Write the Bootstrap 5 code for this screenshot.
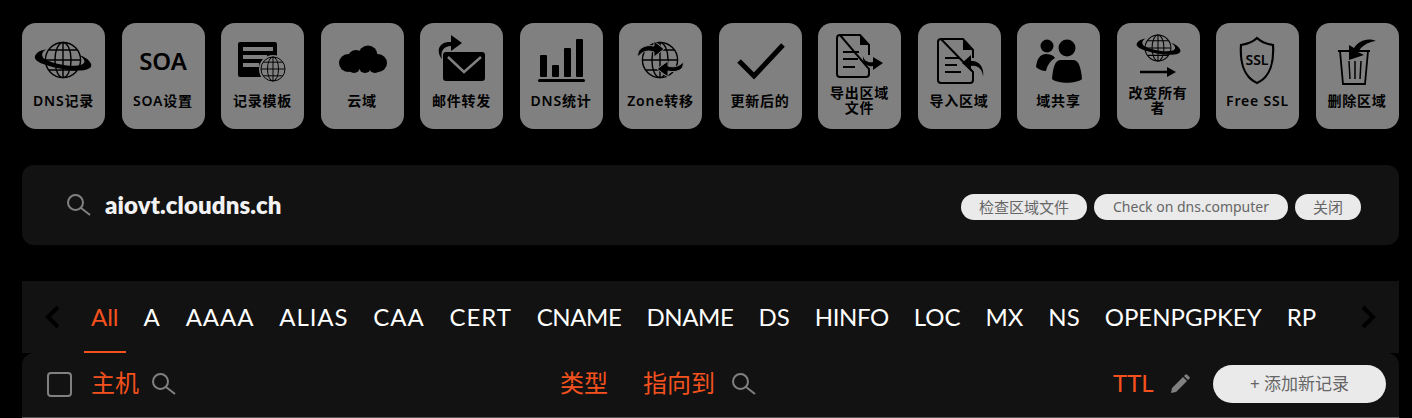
<!DOCTYPE html>
<html lang="en">

<head>
    <title>aiovt.cloudns.ch</title>
    <link href="https://cdn.jsdelivr.net/npm/bootstrap@5.3.0/dist/css/bootstrap.min.css" rel="stylesheet">
    <style>
        html, body { height: 418px; overflow: hidden; }
        body { background: #000; padding: 23px 13px 0 22px; font-family: "Lato", "Noto Sans CJK SC", sans-serif; }
        .tile-row { margin: 0 .4px 0 0; }
        .tile { width: 83px; height: 106px; background: #808080; border-radius: 14px; color: #000; text-decoration: none; }
        .tile svg { display: block; }
        .tile-label { height: 30px; width: 72px; font: 600 14px/15px "Noto Sans", "Noto Sans CJK SC", sans-serif; letter-spacing: .8px; text-align: center; }
        .domain-bar { height: 80px; margin-top: 36px; background: #121212; border-radius: 12px; padding: 0 38px 0 44px; }
        .domain-name { color: #f2f2f2; font: 800 24px "Lato", sans-serif; letter-spacing: .1px; margin: 0 0 2px 14px; }
        .pill-group { gap: 7px; margin-top: 4px; }
        .pill-btn { height: 26px; padding: 0 19px; background: #eaeaea; color: #666; border: 0; font: 14px/26px "Noto Sans", "Noto Sans CJK SC", sans-serif; }
        .pill-cjk { padding: 0 18px; font-size: 15px; }
        .type-bar { height: 72px; margin-top: 36px; background: #121212; padding-left: 22px; }
        .type-bar .nav-link { height: 72px; padding: 18px 7px 0; margin-right: 11px; color: #fff; font: 24px/36px "Lato", "Noto Sans CJK SC", sans-serif; }
        .type-bar .nav-link.active { color: #f4511e; border-bottom: 2px solid #f4511e; }
        .type-bar .nav-link.tab-wide { letter-spacing: .9px; }
        .type-bar .nav-link.tab-narrow { letter-spacing: -.4px; }
        .type-list { margin-left: 23px; flex-wrap: nowrap; }
        .arrow-gap { margin-left: 26px; }
        .head-row { height: 65px; background: #121212; border-radius: 12px 12px 0 0; border-bottom: 1px solid #555; padding: 0 13px 2px 25px; }
        .head-row .form-check-input { width: 25px; height: 25px; margin: 0; background-color: transparent; border: 2px solid #808080; border-radius: 4px; flex-shrink: 0; }
        .head-title { color: #f4511e; font: 24px/1 "Lato", "Noto Sans CJK SC", sans-serif; margin-bottom: 2px; }
        .col-host { width: 488px; padding-left: 19px; flex-shrink: 0; }
        .col-type { width: 83px; flex-shrink: 0; }
        .col-point { width: 470px; flex-shrink: 0; }
        .add-btn { width: 173px; height: 38px; padding: 0; background: #eaeaea; color: #666; border: 0; font: 17px/38px "Noto Sans", "Noto Sans CJK SC", sans-serif; flex-shrink: 0; }
    </style>
</head>

<body>
    <svg width="0" height="0" class="d-block">
        <defs>
            <symbol id="globe" viewBox="0 0 40 40">
                <g fill="none" stroke="#000" stroke-width="1.5">
                    <circle cx="20" cy="20" r="18.5"/>
                    <ellipse cx="20" cy="20" rx="8.5" ry="18.5"/>
                    <path d="M20 1.5v37M1.5 20h37M5 9.5h30M5 30.5h30"/>
                </g>
            </symbol>
            <symbol id="magnifier" viewBox="0 0 25 25">
                <circle cx="9.5" cy="9.5" r="7.5" fill="none" stroke="#808080" stroke-width="2"/>
                <path d="M15 15l9 7" fill="none" stroke="#808080" stroke-width="2"/>
            </symbol>
            <symbol id="ring" viewBox="0 0 60 24">
                <path d="M3 6C-3 12 3 17 28 22C50 26 61 23 59 17C57 12 51 9 47 8C53 12 54 16 49 18C39 21 19 17 11 12C6 8 9 4 13 2C8 3 5 4 3 6Z" fill="#000"/>
            </symbol>
        </defs>
    </svg>

    <div class="tile-row d-flex justify-content-between">
        <a class="tile d-flex flex-column align-items-center" href="#">
            <svg width="83" height="62" viewBox="0 0 83 62">
                <use href="#globe" x="22" y="18" width="38" height="38"/>
                <use href="#ring" x="12" y="24" width="58" height="24"/>
            </svg>
            <div class="tile-label d-flex align-items-center justify-content-center">DNS记录</div>
        </a>
        <a class="tile d-flex flex-column align-items-center" href="#">
            <svg width="83" height="62" viewBox="0 0 83 62">
                <text x="41" y="47" text-anchor="middle" font-family="Noto Sans" font-weight="600" font-size="24">SOA</text>
            </svg>
            <div class="tile-label d-flex align-items-center justify-content-center">SOA设置</div>
        </a>
        <a class="tile d-flex flex-column align-items-center" href="#">
            <svg width="83" height="62" viewBox="0 0 83 62">
                <path d="M19 19h35a2 2 0 0 1 2 2v14a14 14 0 0 0-16 19H19a2 2 0 0 1-2-2V21a2 2 0 0 1 2-2z" fill="#000"/>
                <path d="M22 24h30v4H22zM22 32h24v4H22zM22 40h16v4H22z" fill="#808080"/>
                <circle cx="52" cy="46" r="14" fill="#808080"/>
                <use href="#globe" x="39" y="33" width="26" height="26"/>
            </svg>
            <div class="tile-label d-flex align-items-center justify-content-center">记录模板</div>
        </a>
        <a class="tile d-flex flex-column align-items-center" href="#">
            <svg width="83" height="62" viewBox="0 0 83 62" fill="#000">
                <circle cx="27" cy="40" r="9"/>
                <circle cx="35" cy="35" r="8"/>
                <circle cx="47" cy="32" r="9.500"/>
                <circle cx="57" cy="40" r="9"/>
                <circle cx="33" cy="44" r="6"/>
                <circle cx="44" cy="44" r="6"/>
                <circle cx="54" cy="44" r="6"/>
            </svg>
            <div class="tile-label d-flex align-items-center justify-content-center">云域</div>
        </a>
        <a class="tile d-flex flex-column align-items-center" href="#">
            <svg width="83" height="62" viewBox="0 0 83 62">
                <rect x="23" y="29" width="42" height="29" rx="3" fill="#000"/>
                <path d="M28 34l16 15l17-15" fill="none" stroke="#808080" stroke-width="2.500"/>
                <path d="M22 36C15 27 20 18 31 19V12l11 8l-11 8V23C24 23 20 28 22 36Z" fill="#000"/>
            </svg>
            <div class="tile-label d-flex align-items-center justify-content-center">邮件转发</div>
        </a>
        <a class="tile d-flex flex-column align-items-center" href="#">
            <svg width="83" height="62" viewBox="0 0 83 62">
                <rect x="20" y="32" width="7" height="22" rx="1" fill="#000"/>
                <rect x="32" y="42" width="7" height="12" rx="1" fill="#000"/>
                <rect x="44" y="25" width="7" height="29" rx="1" fill="#000"/>
                <rect x="56" y="16" width="7" height="38" rx="1" fill="#000"/>
                <rect x="18" y="56" width="47" height="3" rx="1.500" fill="#000"/>
            </svg>
            <div class="tile-label d-flex align-items-center justify-content-center">DNS统计</div>
        </a>
        <a class="tile d-flex flex-column align-items-center" href="#">
            <svg width="83" height="62" viewBox="0 0 83 62">
                <use href="#globe" x="22" y="17" width="38" height="40"/>
                <path d="M19 34C17 26 26 21 35 23V18l10 8l-10 8V29C29 27 23 28 19 34Z" fill="#000" stroke="#808080"/>
                <path d="M64 39C66 47 57 50 49 48V54L38 46l11-8V43C55 45 61 43 64 39Z" fill="#000" stroke="#808080"/>
            </svg>
            <div class="tile-label d-flex align-items-center justify-content-center">Zone转移</div>
        </a>
        <a class="tile d-flex flex-column align-items-center" href="#">
            <svg width="83" height="62" viewBox="0 0 83 62">
                <path d="M20 38l15 15L64 22" fill="none" stroke="#000" stroke-width="5"/>
            </svg>
            <div class="tile-label d-flex align-items-center justify-content-center">更新后的</div>
        </a>
        <a class="tile d-flex flex-column align-items-center" href="#">
            <svg width="83" height="62" viewBox="0 0 83 62">
                <path d="M22 12h20l9 10v10M51 46v5a3 3 0 0 1-3 3H22a3 3 0 0 1-3-3V15a3 3 0 0 1 3-3z" fill="none" stroke="#000" stroke-width="2"/>
                <path d="M42 12l9 10H42z" fill="#000"/>
                <path d="M25 29h16M25 36h15M25 44h12" stroke="#000" stroke-width="2"/>
                <path d="M45 33C46 38 50 40 55 39V34l10 6l-10 7V43C50 44 44 41 45 33Z" fill="#000"/>
            </svg>
            <div class="tile-label d-flex align-items-center justify-content-center">导出区域文件</div>
        </a>
        <a class="tile d-flex flex-column align-items-center" href="#">
            <svg width="83" height="62" viewBox="0 0 83 62">
                <path d="M23 16h22l10 11v8M55 49v8a3 3 0 0 1-3 3H23a3 3 0 0 1-3-3V19a3 3 0 0 1 3-3z" fill="none" stroke="#000" stroke-width="2"/>
                <path d="M45 16l10 11H45z" fill="#000"/>
                <path d="M27 35h15M27 42h12M27 49h16" stroke="#000" stroke-width="2"/>
                <path d="M65 54C65 47 60 42 53 43V48L44 40l9-8v6C60 37 67 44 65 54Z" fill="#000"/>
            </svg>
            <div class="tile-label d-flex align-items-center justify-content-center">导入区域</div>
        </a>
        <a class="tile d-flex flex-column align-items-center" href="#">
            <svg width="83" height="62" viewBox="0 0 83 62">
                <circle cx="30" cy="23" r="6.500" fill="#000"/>
                <circle cx="50" cy="25" r="8.500" fill="#000"/>
                <path d="M19 44C20 36 23 31 29 31C33 31 36 32 38 35C33 38 30 43 29 48C25 48 21 46 19 44Z" fill="#000"/>
                <path d="M35 56C36 44 38 37 44 37H56C62 37 64 45 65 56C59 61 41 61 35 56Z" fill="#000"/>
            </svg>
            <div class="tile-label d-flex align-items-center justify-content-center">域共享</div>
        </a>
        <a class="tile d-flex flex-column align-items-center" href="#">
            <svg width="83" height="62" viewBox="0 0 83 62">
                <use href="#globe" x="27" y="11" width="28" height="28"/>
                <use href="#ring" x="19" y="14" width="45" height="18"/>
                <path d="M23 49h28" stroke="#000" stroke-width="2.500"/>
                <path d="M50 44l9 5l-9 5z" fill="#000"/>
            </svg>
            <div class="tile-label d-flex align-items-center justify-content-center">改变所有者</div>
        </a>
        <a class="tile d-flex flex-column align-items-center" href="#">
            <svg width="83" height="62" viewBox="0 0 83 62">
                <path d="M41 15C37 19 31 21 25 22C24 37 27 54 41 60C55 54 58 37 57 22C51 21 45 19 41 15Z" fill="none" stroke="#000" stroke-width="2.200"/>
                <text x="41" y="42" text-anchor="middle" font-family="Noto Sans" font-weight="600" font-size="14">SSL</text>
            </svg>
            <div class="tile-label d-flex align-items-center justify-content-center">Free SSL</div>
        </a>
        <a class="tile d-flex flex-column align-items-center" href="#">
            <svg width="83" height="62" viewBox="0 0 83 62">
                <path d="M22 28h32M24 28l3 33h22l3-33" fill="none" stroke="#000" stroke-width="1.800"/>
                <path d="M33 38l1 18M39 38v18M45 38l-1 18" stroke="#000" stroke-width="1.500"/>
                <path d="M60 18C50 14 42 19 38 25L33 22L33 37L48 32L42 29C45 24 51 19 60 18Z" fill="#000"/>
            </svg>
            <div class="tile-label d-flex align-items-center justify-content-center">删除区域</div>
        </a>
    </div>

    <div class="domain-bar d-flex align-items-center">
        <svg width="25" height="25"><use href="#magnifier"/></svg>
        <span class="domain-name">aiovt.cloudns.ch</span>
        <div class="pill-group d-flex ms-auto">
            <button type="button" class="btn rounded-pill pill-btn pill-cjk">检查区域文件</button>
            <button type="button" class="btn rounded-pill pill-btn">Check on dns.computer</button>
            <button type="button" class="btn rounded-pill pill-btn pill-cjk">关闭</button>
        </div>
    </div>

    <div class="type-bar d-flex align-items-start">
        <svg class="mt-4" width="17" height="24" viewBox="0 0 17 24"><path d="M14 2L4 12l10 10" fill="none" stroke="#000" stroke-width="4"/></svg>
        <ul class="nav type-list">
            <li class="nav-item"><a class="nav-link active" href="#">All</a></li>
            <li class="nav-item"><a class="nav-link tab-wide" href="#">A</a></li>
            <li class="nav-item"><a class="nav-link tab-wide" href="#">AAAA</a></li>
            <li class="nav-item"><a class="nav-link tab-wide" href="#">ALIAS</a></li>
            <li class="nav-item"><a class="nav-link tab-wide" href="#">CAA</a></li>
            <li class="nav-item"><a class="nav-link tab-wide" href="#">CERT</a></li>
            <li class="nav-item"><a class="nav-link tab-narrow" href="#">CNAME</a></li>
            <li class="nav-item"><a class="nav-link tab-narrow" href="#">DNAME</a></li>
            <li class="nav-item"><a class="nav-link" href="#">DS</a></li>
            <li class="nav-item"><a class="nav-link tab-narrow" href="#">HINFO</a></li>
            <li class="nav-item"><a class="nav-link" href="#">LOC</a></li>
            <li class="nav-item"><a class="nav-link" href="#">MX</a></li>
            <li class="nav-item"><a class="nav-link" href="#">NS</a></li>
            <li class="nav-item"><a class="nav-link" href="#">OPENPGPKEY</a></li>
            <li class="nav-item"><a class="nav-link" href="#">RP</a></li>
        </ul>
        <svg class="mt-4 arrow-gap" width="17" height="24" viewBox="0 0 17 24"><path d="M3 2l10 10L3 22" fill="none" stroke="#000" stroke-width="4"/></svg>
    </div>

    <div class="head-row d-flex align-items-center">
        <input class="form-check-input" type="checkbox" aria-label="select all">
        <div class="col-host d-flex align-items-center gap-2">
            <span class="head-title">主机</span>
            <svg class="ms-1" width="25" height="25"><use href="#magnifier"/></svg>
        </div>
        <div class="col-type"><span class="head-title">类型</span></div>
        <div class="col-point d-flex align-items-center gap-2">
            <span class="head-title">指向到</span>
            <svg class="ms-2" width="25" height="25"><use href="#magnifier"/></svg>
        </div>
        <span class="head-title">TTL</span>
        <svg class="ms-3" width="20" height="20" viewBox="0 0 20 20"><path d="M1 19l1-5L13 3l4 4L6 18zM14 2l1.500-1.500a1 1 0 0 1 1.400 0l2.600 2.600a1 1 0 0 1 0 1.400L18 6z" fill="#808080"/></svg>
        <button type="button" class="btn rounded-pill add-btn ms-auto">+ 添加新记录</button>
    </div>
</body>

</html>
